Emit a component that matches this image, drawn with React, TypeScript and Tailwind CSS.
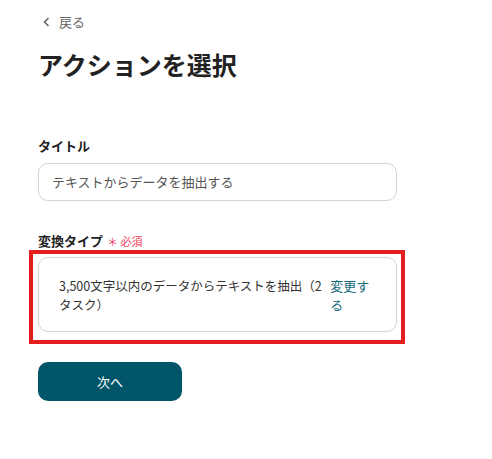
import React from "react";

function ActionSelect() {
  return (
    <div className="min-h-screen w-full bg-white pl-[38px] pt-[12px] font-['Noto_Sans_CJK_JP','Noto_Sans',sans-serif]">
      {/* back */}
      <div className="flex items-center gap-[9px] h-[20px] text-[13px] text-[#666] pl-[5px]">
        <svg width="7" height="10" viewBox="0 0 7 10" fill="none">
          <path d="M5.5 1L1.5 5L5.5 9" stroke="#666" strokeWidth="1.6" />
        </svg>
        <span>戻る</span>
      </div>
      {/* heading */}
      <h1 className="mt-[14px] text-[25px] leading-[36px] font-bold text-[#222]">
        アクションを選択
      </h1>

      <div className="w-[359px]">
        {/* title */}
        <p className="mt-[54px] text-[13px] leading-[20px] font-bold text-[#222]">タイトル</p>
        <div className="mt-[7px] h-[38px] rounded-[10px] border border-[#d4d4d4] px-[13px] flex items-center text-[13px] text-[#555]">
          テキストからデータを抽出する
        </div>

        {/* type */}
        <p className="mt-[30px] text-[13px] leading-[20px] font-bold text-[#222] flex items-center">
          変換タイプ
          <span className="ml-[4px] text-[11px] font-normal text-[#f0405a]">＊ 必須</span>
        </p>
        <div className="relative mt-[6px]">
          <div className="min-h-[75px] rounded-[10px] border border-[#d4d4d4] pl-[20px] pr-[26px] flex items-center text-[12.5px] leading-[19px]">
            <p className="w-[270px] text-[#333] [line-break:anywhere]">3,500文字以内のデータからテキストを抽出（2タスク）</p>
            <a className="ml-[2px] w-[40px] text-[13px] text-[#13697a]">変更する</a>
          </div>
          {/* highlight */}
          <div className="absolute -left-[9px] -top-[7px] -right-[8px] -bottom-[12px] border-4 border-[#e41e1e] pointer-events-none" />
        </div>

        {/* next */}
        <button className="mt-[30px] w-[144px] h-[39px] rounded-[10px] bg-[#005569] text-white text-[13px]">
          次へ
        </button>
      </div>
    </div>
  );
}

export default function App() {
  return <ActionSelect />;
}
